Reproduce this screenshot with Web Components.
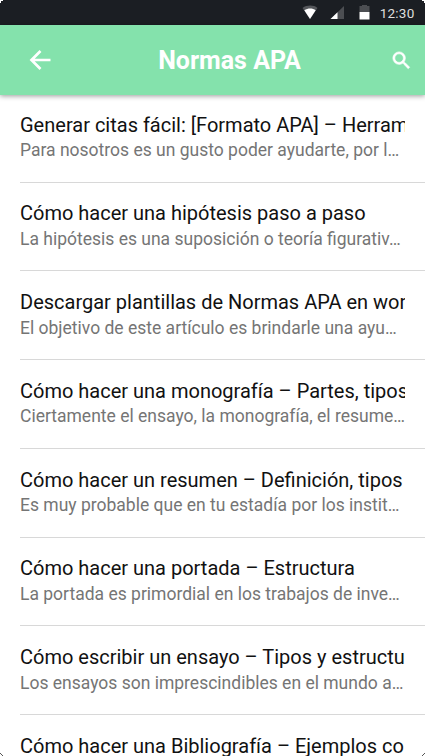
<!DOCTYPE html>
<html lang="es">
<head>
<meta charset="utf-8">
<title>Normas APA</title>
<style>
  body { margin: 0; background: #fff; font-family: Roboto, sans-serif; }
</style>
</head>
<body>
<app-screen>
  <status-bar slot="top">12:30</status-bar>
  <app-header slot="top">Normas APA</app-header>
  <article-item>Generar citas fácil: [Formato APA] – Herram<span slot="summary">Para nosotros es un gusto poder ayudarte, por l…</span></article-item>
  <article-item>Cómo hacer una hipótesis paso a paso<span slot="summary">La hipótesis es una suposición o teoría figurativ…</span></article-item>
  <article-item>Descargar plantillas de Normas APA en wor<span slot="summary">El objetivo de este artículo es brindarle una ayu…</span></article-item>
  <article-item>Cómo hacer una monografía – Partes, tipos<span slot="summary">Ciertamente el ensayo, la monografía, el resume…</span></article-item>
  <article-item>Cómo hacer un resumen – Definición, tipos<span slot="summary">Es muy probable que en tu estadía por los instit…</span></article-item>
  <article-item>Cómo hacer una portada – Estructura<span slot="summary">La portada es primordial en los trabajos de inve…</span></article-item>
  <article-item>Cómo escribir un ensayo – Tipos y estructu<span slot="summary">Los ensayos son imprescindibles en el mundo a…</span></article-item>
  <article-item>Cómo hacer una Bibliografía – Ejemplos co</article-item>
</app-screen>

<script>
class AppScreen extends HTMLElement {
  constructor() {
    super();
    this.attachShadow({ mode: "open" });
    this.shadowRoot.innerHTML = `
      <style>
        :host { display: flex; flex-direction: column; position: relative; width: 425px; height: 756px; overflow: hidden; background: #fff; }
        .list { flex: 1; min-height: 0; margin-top: -1px; }
        .top { position: relative; z-index: 1; }
        .corners { position: absolute; inset: 0; z-index: 2; pointer-events: none; }
      </style>
      <div class="top"><slot name="top"></slot></div>
      <div class="list"><slot></slot></div>
      <svg class="corners" width="425" height="756" viewBox="0 0 425 756">
        <path d="M0 0h3v1H1v2H0zM425 0h-3v1h2v2h1z" fill="#fff"/>
        <path d="M0 753l3 3M425 753l-3 3" stroke="#555" stroke-width="1"/>
      </svg>
    `;
  }
}

class StatusBar extends HTMLElement {
  constructor() {
    super();
    this.attachShadow({ mode: "open" });
    this.shadowRoot.innerHTML = `
      <style>
        :host { display: flex; align-items: center; justify-content: flex-end; box-sizing: border-box; height: 25px; padding-right: 10.500px; background: #1b1e23; color: #dedede; font-size: 13.500px; letter-spacing: 0.250px; }
        svg { display: block; }
        .time { line-height: 25px; padding-top: 1px; }
      </style>
      <svg width="78" height="25" viewBox="0 0 78 25">
        <path d="M0.500 8C5 4.800 11.500 4.800 15.500 8L8 19z" fill="#55575b"/>
        <path d="M2.300 10.300C6 8 10.500 8 13.700 10.300L8 19z" fill="#fff"/>
        <path d="M42 6v13H28.500z" fill="#4c4e52"/>
        <path d="M35.500 12.200V19H28.500z" fill="#fff"/>
        <path d="M60 5h5v1h2.500v6h-10V6H60z" fill="#4c4e52"/>
        <path d="M57.500 12h10v7.500h-10z" fill="#fff"/>
      </svg>
      <span class="time"><slot></slot></span>
    `;
  }
}

class AppHeader extends HTMLElement {
  constructor() {
    super();
    this.attachShadow({ mode: "open" });
    this.shadowRoot.innerHTML = `
      <style>
        :host { display: grid; grid-template-columns: 62px 1fr 44px; align-items: center; box-sizing: border-box; height: 70px; padding-right: 12px; padding-left: 28px; background: #84e2ac; color: #fff; box-shadow: 0 1px 5px rgba(0, 0, 0, 0.4); }
        h1 { margin: 0; padding-top: 2px; font-size: 25px; font-weight: 700; line-height: 30px; text-align: center; }
        svg { display: block; fill: #fff; }
        .search { justify-self: end; }
      </style>
      <svg width="24" height="24" viewBox="0 0 24 24">
        <path d="M22.500 12H3.500M12.500 3L3.500 12L12.500 21" fill="none" stroke="#fff" stroke-width="2.700"/>
      </svg>
      <h1><slot></slot></h1>
      <svg class="search" width="23" height="23" viewBox="0 0 24 24">
        <path d="M15.500 14h-.79l-.28-.27A6.471 6.471 0 0 0 16 9.500 6.500 6.500 0 1 0 9.500 16c1.610 0 3.090-.59 4.230-1.570l.27.28v.79l5 4.990L20.490 19l-4.990-5zm-6 0C7.010 14 5 11.990 5 9.500S7.010 5 9.500 5 14 7.010 14 9.500 11.990 14 9.500 14z" stroke="#fff" stroke-width="0.700"/>
      </svg>
    `;
  }
}

class ArticleItem extends HTMLElement {
  constructor() {
    super();
    this.attachShadow({ mode: "open" });
    this.shadowRoot.innerHTML = `
      <style>
        :host { display: block; box-sizing: border-box; height: 88.730px; margin-left: 20px; padding: 17.700px 20px 0 0; border-bottom: 1px solid #d8d8d8; }
        .title, .summary { overflow: hidden; white-space: nowrap; }
        .title { color: #111; font-size: 20px; line-height: 26px; }
        .summary { margin-top: 0.600px; color: #757575; font-size: 17.500px; line-height: 24px; }
      </style>
      <div class="title"><slot></slot></div>
      <div class="summary"><slot name="summary"></slot></div>
    `;
  }
}

customElements.define("app-screen", AppScreen);
customElements.define("status-bar", StatusBar);
customElements.define("app-header", AppHeader);
customElements.define("article-item", ArticleItem);
</script>
</body>
</html>
